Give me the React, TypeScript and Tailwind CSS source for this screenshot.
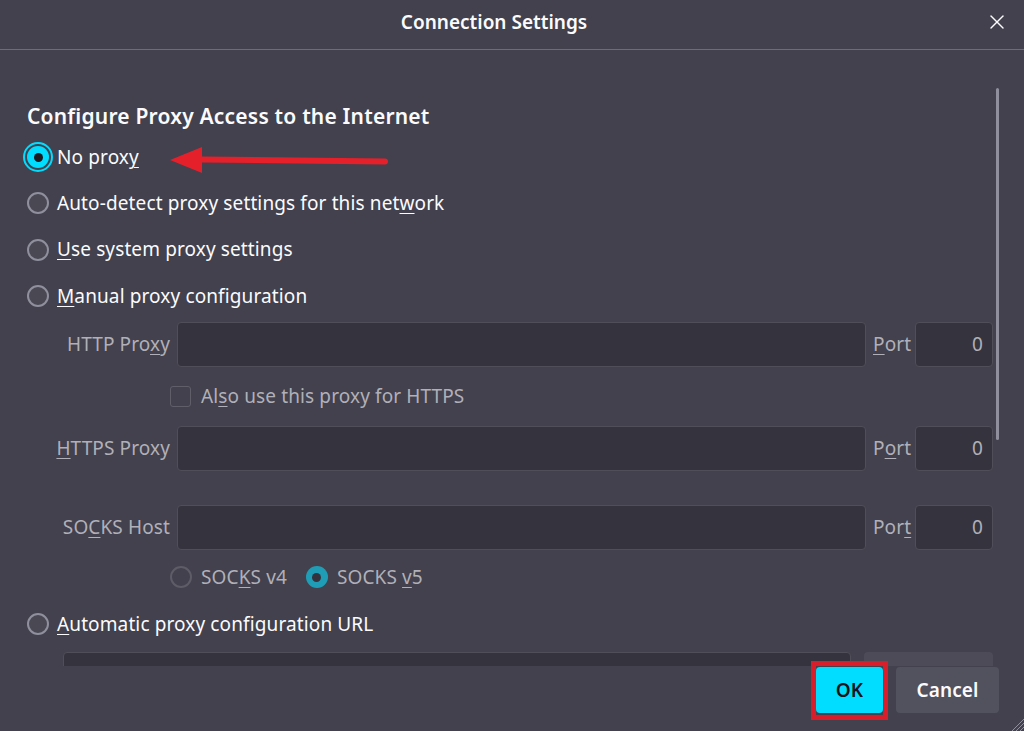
import { X } from "lucide-react";

const font = { fontFamily: '"Noto Sans", "Open Sans", sans-serif' };

function Radio({ checked = false, disabled = false, focused = false }: { checked?: boolean; disabled?: boolean; focused?: boolean }) {
  if (checked) {
    return (
      <span
        className={`relative flex h-[22px] w-[22px] shrink-0 items-center justify-center rounded-full ${
          disabled ? "bg-[#1f9db6]" : "bg-[#00ddff]"
        } ${focused ? "outline-2 outline-offset-[2px] outline-[#00ddff]" : ""}`}
      >
        <span className={`h-[9px] w-[9px] rounded-full ${disabled ? "bg-[#34333d]" : "bg-[#1c1b22]"}`} />
      </span>
    );
  }
  return (
    <span
      className={`h-[22px] w-[22px] shrink-0 rounded-full border-2 ${
        disabled ? "border-[#5d5c67] bg-[#42414d]" : "border-[#8f8f9d] bg-[#494853]"
      }`}
    />
  );
}

function Key({ children }: { children: string }) {
  return <u className="underline underline-offset-[3px] decoration-1">{children}</u>;
}

function ProxyRow({ label, port }: { label: React.ReactNode; port: React.ReactNode }) {
  return (
    <div className="flex h-[45px] items-center">
      <span className="w-[150px] shrink-0 pr-[7px] text-right text-[#b1b0b8]">{label}</span>
      <div className="h-full flex-1 rounded-[4px] border border-[#504f59] bg-[#35343e]" />
      <span className="ml-[7px] mr-[6px] w-[36px] text-[#b1b0b8]">{port}</span>
      <div className="flex h-full w-[78px] items-center justify-end rounded-[4px] border border-[#504f59] bg-[#35343e] pr-[9px] text-[#b1b0b8]">
        0
      </div>
    </div>
  );
}

export default function App() {
  return (
    <div
      className="relative flex h-[731px] w-[1024px] flex-col overflow-hidden bg-[#42414d] text-[19px] tracking-[0.12px] text-[#fbfbfe]"
      style={font}
    >
      {/* Titre */}
      <div className="flex h-[50px] shrink-0 items-center border-b border-[#6d6c77] pb-[5px]">
        <div className="flex-1 text-center text-[19px] font-semibold tracking-normal">Connection Settings</div>
        <div className="flex w-[36px] justify-start">
          <X className="ml-[-3px] h-[24px] w-[24px] text-[#fbfbfe]" strokeWidth={1.4} />
        </div>
      </div>

      {/* Contenu */}
      <div className="relative flex-1 overflow-hidden pl-[27px] pr-[31px] pt-[52px]">
        <h2 className="h-[28px] text-[21px] font-semibold leading-[28px] tracking-[0.2px]">Configure Proxy Access to the Internet</h2>

        <div className="mt-[4px] flex h-[46px] items-center gap-[8px]">
          <Radio checked focused />
          <span>
            No prox<Key>y</Key>
          </span>
        </div>
        <div className="flex h-[46px] items-center gap-[8px]">
          <Radio />
          <span>
            Auto-detect proxy settings for this net<Key>w</Key>ork
          </span>
        </div>
        <div className="flex h-[47px] items-center gap-[8px]">
          <Radio />
          <span>
            <Key>U</Key>se system proxy settings
          </span>
        </div>
        <div className="flex h-[46px] items-center gap-[8px]">
          <Radio />
          <span>
            <Key>M</Key>anual proxy configuration
          </span>
        </div>

        <div className="mt-[3px]">
          <ProxyRow
            label={
              <>
                HTTP Pro<Key>x</Key>y
              </>
            }
            port={
              <>
                <Key>P</Key>ort
              </>
            }
          />
          <div className="flex h-[59px] items-center pl-[143px]">
            <span className="h-[21px] w-[21px] rounded-[3px] border border-[#5f5e69] bg-[#42414d]" />
            <span className="ml-[10px] text-[#b1b0b8]">
              Al<Key>s</Key>o use this proxy for HTTPS
            </span>
          </div>
          <ProxyRow
            label={
              <>
                <Key>H</Key>TTPS Proxy
              </>
            }
            port={
              <>
                P<Key>o</Key>rt
              </>
            }
          />
          <div className="mt-[34px]">
            <ProxyRow
              label={
                <>
                  SO<Key>C</Key>KS Host
                </>
              }
              port={
                <>
                  Por<Key>t</Key>
                </>
              }
            />
          </div>
          <div className="flex h-[54px] items-center pl-[143px] text-[#b1b0b8]">
            <Radio disabled />
            <span className="ml-[9px]">
              SOC<Key>K</Key>S v4
            </span>
            <span className="ml-[19px]">
              <Radio checked disabled />
            </span>
            <span className="ml-[9px]">
              SOCKS <Key>v</Key>5
            </span>
          </div>
        </div>

        <div className="flex h-[40px] items-center gap-[8px]">
          <Radio />
          <span>
            <Key>A</Key>utomatic proxy configuration URL
          </span>
        </div>
        <div className="mt-[8px] flex h-[45px] items-start pl-[36px]">
          <div className="h-full flex-1 rounded-[4px] border border-[#504f59] bg-[#35343e]" />
          <div className="ml-[13px] h-full w-[129px] rounded-[4px] bg-[#4c4b57]" />
        </div>

        {/* Barre de défilement */}
        <div className="absolute left-[996px] top-[38px] h-[352px] w-[3px] rounded-full bg-[#8f8f9d]" />

        {/* Flèche d'annotation */}
        <svg className="absolute left-[166px] top-[95px]" width="224" height="32" viewBox="0 0 224 32">
          <path d="M36 14.5 L219 16.5" stroke="#e5202b" strokeWidth="6" strokeLinecap="round" />
          <path d="M4 15 L36 2 L36 28 Z" fill="#e5202b" />
        </svg>
      </div>

      {/* Boutons */}
      <div className="relative flex h-[65px] shrink-0 items-start justify-end gap-[13px] pr-[25px] pt-[1px]">
        <button className="relative flex h-[46px] w-[67px] items-center justify-center rounded-[4px] bg-[#00ddff] text-[19px] font-semibold text-[#15141a]">
          OK
          <span className="absolute -bottom-[7px] -left-[5px] -right-[5px] -top-[6px] border-[5px] border-[#d81e2a]" />
        </button>
        <button className="flex h-[46px] w-[103px] items-center justify-center rounded-[4px] bg-[#52515e] text-[19px] font-semibold text-[#fbfbfe]">
          Cancel
        </button>
        <svg className="absolute bottom-0 right-0" width="14" height="14" viewBox="0 0 14 14">
          <path d="M14 2 L2 14 M14 6 L6 14 M14 10 L10 14" stroke="#8f8f9d" strokeWidth="1" />
        </svg>
      </div>
    </div>
  );
}
